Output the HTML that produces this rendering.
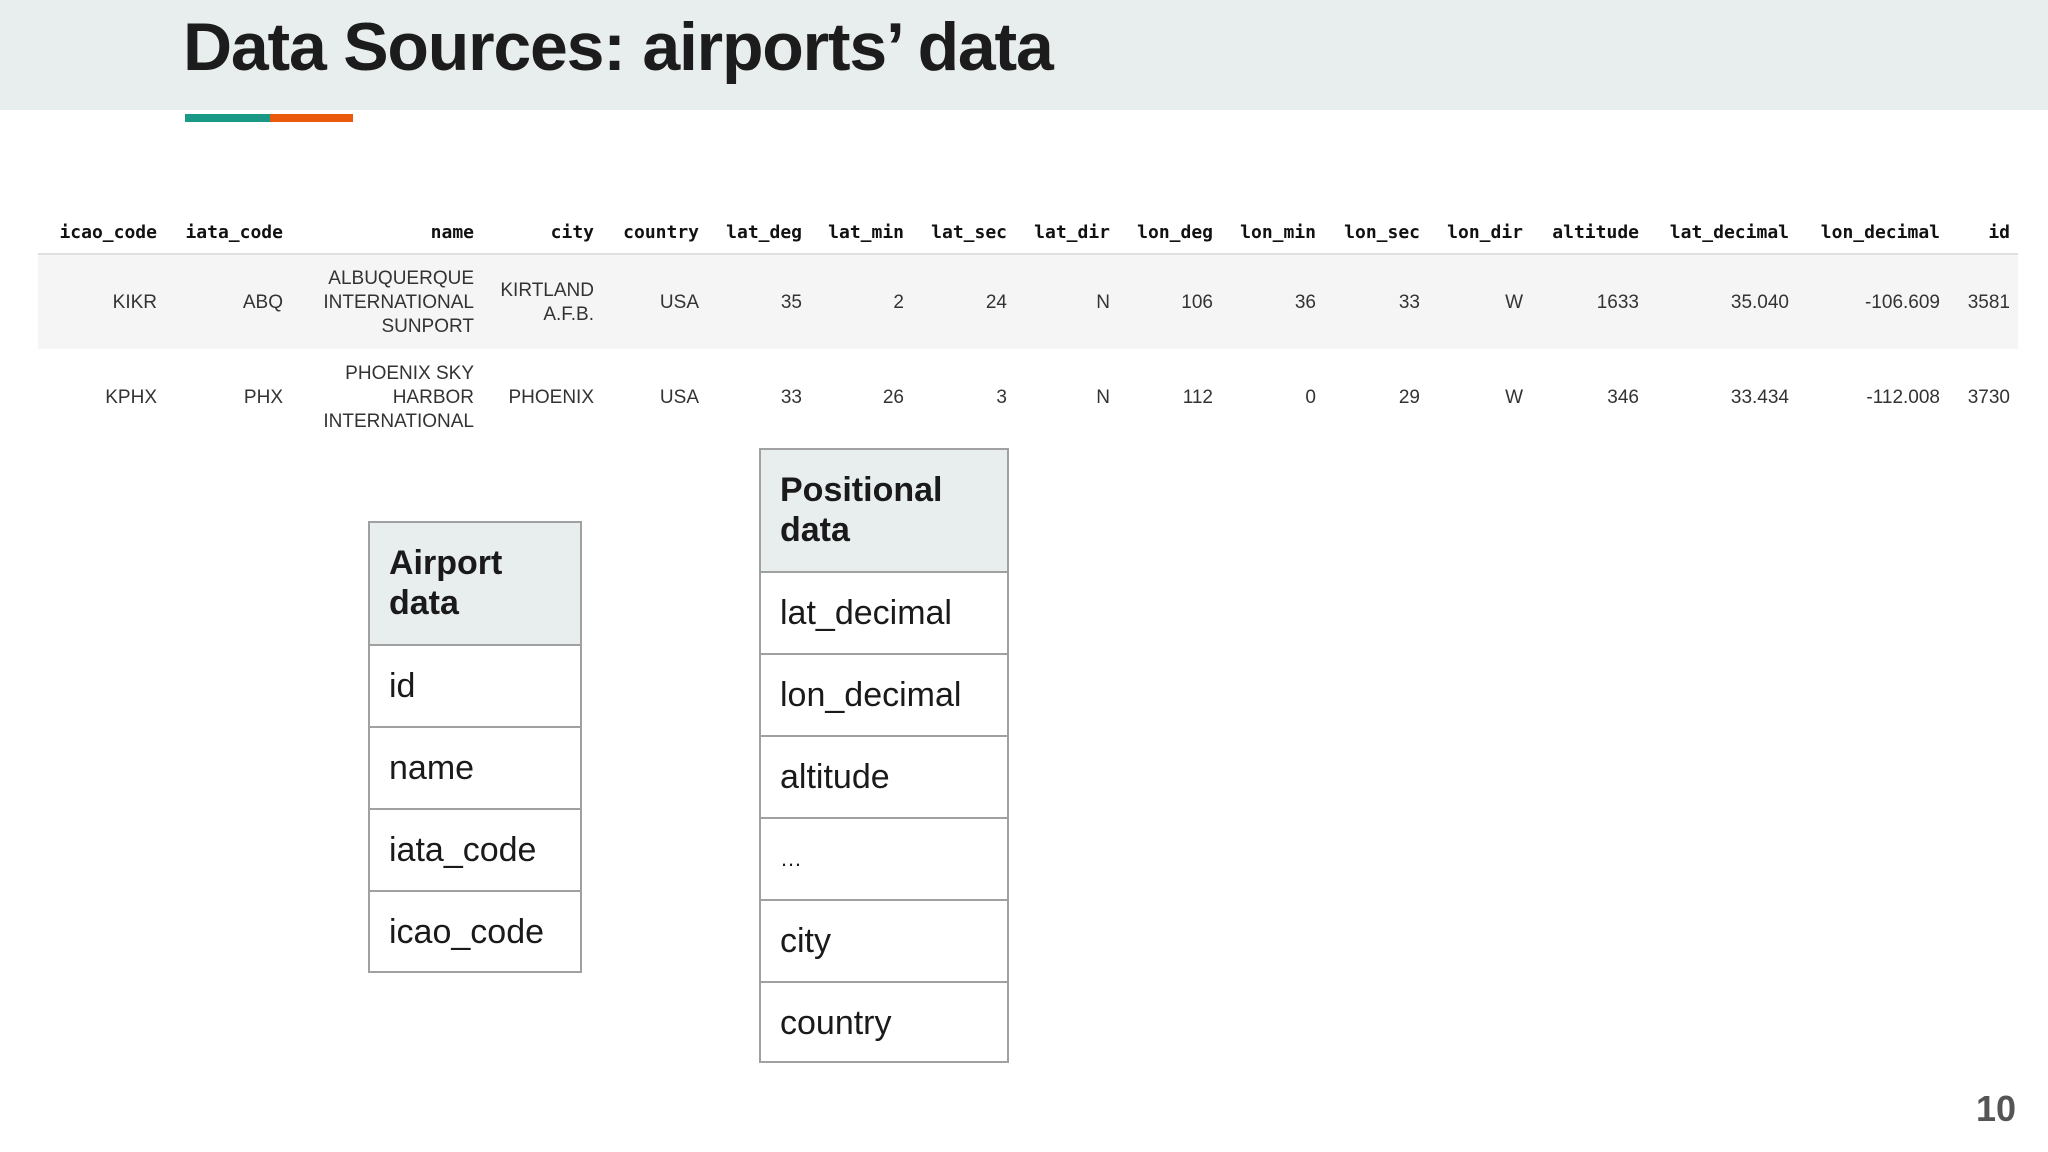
<!DOCTYPE html>
<html><head><meta charset="utf-8"><style>
body{margin:0;width:2048px;height:1152px;position:relative;background:#fff;overflow:hidden;font-family:"Liberation Sans",sans-serif;color:#222}
.hdr{position:absolute;left:0;top:0;width:2048px;height:110px;background:#e8eded}
.title{position:absolute;left:183px;top:8px;font-size:68px;font-weight:bold;color:#1c1c1c;letter-spacing:-1.2px;white-space:nowrap}
.bar{position:absolute;top:114px;height:8px}
.c{position:absolute;text-align:right;white-space:nowrap;font-size:19px;line-height:24px;color:#333}
.h{font-family:"DejaVu Sans Mono","Liberation Mono",monospace;font-weight:bold;font-size:18px;color:#111;top:221px}
.box{position:absolute;border:2px solid #a0a0a0;box-sizing:border-box}
.box div{box-sizing:border-box;border-top:2px solid #a0a0a0;height:82px;padding-left:19px;font-size:34px;line-height:80px;color:#1a1a1a}
.box div.hd{border-top:none;background:#e8eded;font-weight:bold;line-height:40px;padding-top:20px;height:121px}
</style></head><body>
<div class="hdr"></div>
<div class="title">Data Sources: airports’ data</div>
<div class="bar" style="left:185px;width:85px;background:#1a9a86"></div>
<div class="bar" style="left:270px;width:83px;background:#ea5a0c"></div>

<div style="position:absolute;left:38px;top:253px;width:1980px;height:2px;background:#e0e0e0"></div>
<div style="position:absolute;left:38px;top:255px;width:1980px;height:94px;background:#f5f5f5"></div>

<div class="c h" style="right:1891px">icao_code</div>
<div class="c h" style="right:1765px">iata_code</div>
<div class="c h" style="right:1574px">name</div>
<div class="c h" style="right:1454px">city</div>
<div class="c h" style="right:1349px">country</div>
<div class="c h" style="right:1246px">lat_deg</div>
<div class="c h" style="right:1144px">lat_min</div>
<div class="c h" style="right:1041px">lat_sec</div>
<div class="c h" style="right:938px">lat_dir</div>
<div class="c h" style="right:835px">lon_deg</div>
<div class="c h" style="right:732px">lon_min</div>
<div class="c h" style="right:628px">lon_sec</div>
<div class="c h" style="right:525px">lon_dir</div>
<div class="c h" style="right:409px">altitude</div>
<div class="c h" style="right:259px">lat_decimal</div>
<div class="c h" style="right:108px">lon_decimal</div>
<div class="c h" style="right:38px">id</div>

<div class="c" style="right:1891px;top:291px">KIKR</div>
<div class="c" style="right:1765px;top:291px">ABQ</div>
<div class="c" style="right:1574px;top:267px">ALBUQUERQUE<br>INTERNATIONAL<br>SUNPORT</div>
<div class="c" style="right:1454px;top:279px">KIRTLAND<br>A.F.B.</div>
<div class="c" style="right:1349px;top:291px">USA</div>
<div class="c" style="right:1246px;top:291px">35</div>
<div class="c" style="right:1144px;top:291px">2</div>
<div class="c" style="right:1041px;top:291px">24</div>
<div class="c" style="right:938px;top:291px">N</div>
<div class="c" style="right:835px;top:291px">106</div>
<div class="c" style="right:732px;top:291px">36</div>
<div class="c" style="right:628px;top:291px">33</div>
<div class="c" style="right:525px;top:291px">W</div>
<div class="c" style="right:409px;top:291px">1633</div>
<div class="c" style="right:259px;top:291px">35.040</div>
<div class="c" style="right:108px;top:291px">-106.609</div>
<div class="c" style="right:38px;top:291px">3581</div>

<div class="c" style="right:1891px;top:386px">KPHX</div>
<div class="c" style="right:1765px;top:386px">PHX</div>
<div class="c" style="right:1574px;top:362px">PHOENIX SKY<br>HARBOR<br>INTERNATIONAL</div>
<div class="c" style="right:1454px;top:386px">PHOENIX</div>
<div class="c" style="right:1349px;top:386px">USA</div>
<div class="c" style="right:1246px;top:386px">33</div>
<div class="c" style="right:1144px;top:386px">26</div>
<div class="c" style="right:1041px;top:386px">3</div>
<div class="c" style="right:938px;top:386px">N</div>
<div class="c" style="right:835px;top:386px">112</div>
<div class="c" style="right:732px;top:386px">0</div>
<div class="c" style="right:628px;top:386px">29</div>
<div class="c" style="right:525px;top:386px">W</div>
<div class="c" style="right:409px;top:386px">346</div>
<div class="c" style="right:259px;top:386px">33.434</div>
<div class="c" style="right:108px;top:386px">-112.008</div>
<div class="c" style="right:38px;top:386px">3730</div>

<div class="box" style="left:368px;top:521px;width:214px;height:452px">
<div class="hd">Airport<br>data</div>
<div>id</div><div>name</div><div>iata_code</div><div>icao_code</div>
</div>

<div class="box" style="left:759px;top:448px;width:250px;height:615px">
<div class="hd">Positional<br>data</div>
<div>lat_decimal</div><div>lon_decimal</div><div>altitude</div><div style="font-size:22px">…</div><div>city</div><div>country</div>
</div>

<div style="position:absolute;left:1976px;top:1088px;font-size:36px;font-weight:bold;color:#555">10</div>
</body></html>
